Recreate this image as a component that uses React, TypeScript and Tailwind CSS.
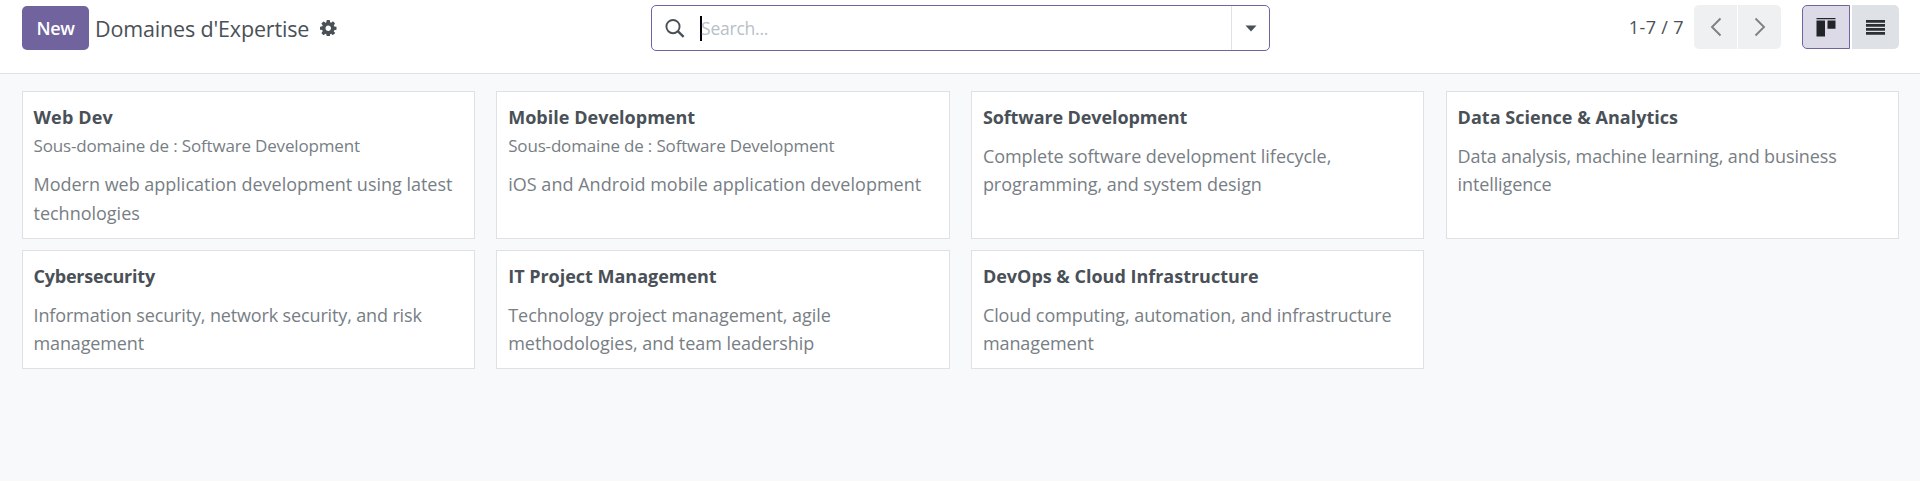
type Domain = {
  name: string;
  parent?: string;
  description: string[];
  nameSpacing: string;
  textSpacing: string;
};

const domains: Domain[] = [
  {
    name: "Web Dev",
    parent: "Software Development",
    description: ["Modern web application development using latest", "technologies"],
    nameSpacing: "tracking-[0.17px]",
    textSpacing: "tracking-[-0.01px]",
  },
  {
    name: "Mobile Development",
    parent: "Software Development",
    description: ["iOS and Android mobile application development"],
    nameSpacing: "tracking-[0.02px]",
    textSpacing: "tracking-[0.02px]",
  },
  {
    name: "Software Development",
    description: ["Complete software development lifecycle,", "programming, and system design"],
    nameSpacing: "tracking-[-0.1px]",
    textSpacing: "tracking-[-0.04px]",
  },
  {
    name: "Data Science & Analytics",
    description: ["Data analysis, machine learning, and business", "intelligence"],
    nameSpacing: "tracking-[0.03px]",
    textSpacing: "tracking-[-0.12px]",
  },
  {
    name: "Cybersecurity",
    description: ["Information security, network security, and risk", "management"],
    nameSpacing: "tracking-[-0.22px]",
    textSpacing: "tracking-[-0.14px]",
  },
  {
    name: "IT Project Management",
    description: ["Technology project management, agile", "methodologies, and team leadership"],
    nameSpacing: "tracking-[-0.02px]",
    textSpacing: "tracking-[-0.04px]",
  },
  {
    name: "DevOps & Cloud Infrastructure",
    description: ["Cloud computing, automation, and infrastructure", "management"],
    nameSpacing: "tracking-[-0.01px]",
    textSpacing: "tracking-[-0.08px]",
  },
];

function GearIcon() {
  return (
    <svg className="size-[16.5px]" viewBox="0 0 1536 1536" fill="currentColor" aria-hidden="true">
      <path d="M1024 768q0-106-75-181t-181-75-181 75-75 181 75 181 181 75 181-75 75-181zm512-109v222q0 12-8 23t-20 13l-185 28q-19 54-39 91 35 50 107 138 10 12 10 25t-9 23q-27 37-99 108t-94 71q-12 0-26-9l-138-108q-44 23-91 38-16 136-29 186-7 28-36 28h-222q-14 0-24.500-8.500t-11.500-21.500l-28-184q-49-16-90-37l-141 107q-10 9-25 9-14 0-25-11-126-114-165-168-7-10-7-23 0-12 8-23 15-21 51-66.500t54-70.500q-27-50-41-99l-183-27q-13-2-21-12.500t-8-23.500v-222q0-12 8-23t19-13l186-28q14-46 39-92-40-57-107-138-10-12-10-24 0-10 9-23 26-36 98.500-107.500t94.500-71.500q13 0 26 10l138 107q44-23 91-38 16-136 29-186 7-28 36-28h222q14 0 24.500 8.500t11.500 21.500l28 184q49 16 90 37l142-107q9-9 24-9 13 0 25 10 129 119 165 170 7 8 7 22 0 12-8 23-15 21-51 66.500t-54 70.500q26 50 41 98l183 28q13 2 21 12.500t8 23.500z" />
    </svg>
  );
}

function SearchIcon() {
  return (
    <svg className="h-[19px] w-5" viewBox="0 0 20 19" fill="none" stroke="#495057" aria-hidden="true">
      <circle cx="8" cy="7.6" r="6.6" strokeWidth="1.9" />
      <path d="M12.8 12.2 18.6 17.8" strokeWidth="2.4" />
    </svg>
  );
}

function Chevron({ points }: { points: string }) {
  return (
    <svg className="h-5 w-3" viewBox="0 0 12 20" fill="none" stroke="#7e8184" strokeWidth="1.9" aria-hidden="true">
      <polyline points={points} />
    </svg>
  );
}

function Header() {
  return (
    <header className="grid h-[74px] shrink-0 grid-cols-[629px_619px_1fr] items-start border-b border-[#dee2e6] bg-white pr-[21px] pl-[22px]">
      <div className="mt-1.5 flex h-11 items-center">
        <button className="h-11 w-[67px] rounded-[5px] bg-[#71639e] text-[18px] font-semibold tracking-[-0.3px] text-white">
          New
        </button>
        <h1 className="mt-px ml-[6px] whitespace-nowrap text-[21.5px] leading-[30px] tracking-[-0.16px]">Domaines d'Expertise</h1>
        <button className="ml-[11px]" aria-label="Actions">
          <GearIcon />
        </button>
      </div>

      <div className="mt-[5px] flex h-[46px] items-center rounded-[5px] border border-[#71639e] bg-white">
        <span className="ml-[13px]">
          <SearchIcon />
        </span>
        <span className="ml-[15px] h-[25px] w-0.5 bg-black" />
        <span className="-ml-px flex-1 text-[17.5px] tracking-[-0.22px] text-[#b8c0c8]">Search...</span>
        <button className="flex h-full w-[38px] items-center justify-center border-l border-[#dee2e6]" aria-label="Search options">
          <svg className="h-[7px] w-3" viewBox="0 0 12 7" fill="currentColor" aria-hidden="true">
            <path d="M.5.5h11L6 6.500z" />
          </svg>
        </button>
      </div>

      <div className="mt-[5px] flex h-11 items-center justify-end">
        <span className="mr-[10px] text-[18px] tracking-[0.36px]">1-7 / 7</span>
        <button className="mr-px flex h-11 w-[43px] items-center justify-center rounded-l-[5px] bg-[#eff0f1]" aria-label="Previous">
          <Chevron points="10.500,1.500 2,10 10.500,18.500" />
        </button>
        <button className="flex h-11 w-[43px] items-center justify-center rounded-r-[5px] bg-[#eff0f1]" aria-label="Next">
          <Chevron points="1.500,1.500 10,10 1.500,18.500" />
        </button>
        <button className="ml-[21px] flex h-11 w-12 items-center justify-center rounded-l-[5px] border border-[#71639e] bg-[#dddae8]" aria-label="Kanban view">
          <svg className="h-5 w-5" viewBox="0 0 20 20" fill="#212529" aria-hidden="true">
            <path d="M.5 1h19v1.300H.5zM.5 3.500H9v16H.5zM11.500 3.500h8v8.300h-8z" />
          </svg>
        </button>
        <button className="ml-0.5 flex h-11 w-[47px] items-center justify-center rounded-r-[5px] bg-[#dee2e6]" aria-label="List view">
          <svg className="h-[15px] w-[19px]" viewBox="0 0 19 15" fill="#2c3035" aria-hidden="true">
            <path d="M0 0h19v2.800H0zM0 4h19v2.800H0zM0 8h19v2.800H0zM0 12h19v2.800H0z" />
          </svg>
        </button>
      </div>
    </header>
  );
}

function DomainCard({ domain }: { domain: Domain }) {
  return (
    <article className="border border-[#dee2e6] bg-white px-[11px] pt-[11px] leading-[28.500px]">
      <h2 className={`text-[18px] font-bold ${domain.nameSpacing}`}>{domain.name}</h2>
      {domain.parent && (
        <p className="text-[17px] tracking-[-0.17px] text-[#777e84]">Sous-domaine de : {domain.parent}</p>
      )}
      <p className={`mt-[10px] whitespace-nowrap text-[18px] text-[#777e84] ${domain.textSpacing}`}>
        {domain.description.map((line) => (
          <span key={line} className="block">
            {line}
          </span>
        ))}
      </p>
    </article>
  );
}

export default function App() {
  return (
    <div className="flex h-[481px] w-full flex-col overflow-hidden bg-[#f8f9fa] font-['Open_Sans','Noto_Sans',sans-serif] text-[#495057]">
      <Header />
      <main className="grid grid-cols-4 grid-rows-[148px_119px] gap-x-[21.3px] gap-y-[11px] pt-[17px] pr-[21px] pl-[21.5px]">
        {domains.map((domain) => (
          <DomainCard key={domain.name} domain={domain} />
        ))}
      </main>
    </div>
  );
}
